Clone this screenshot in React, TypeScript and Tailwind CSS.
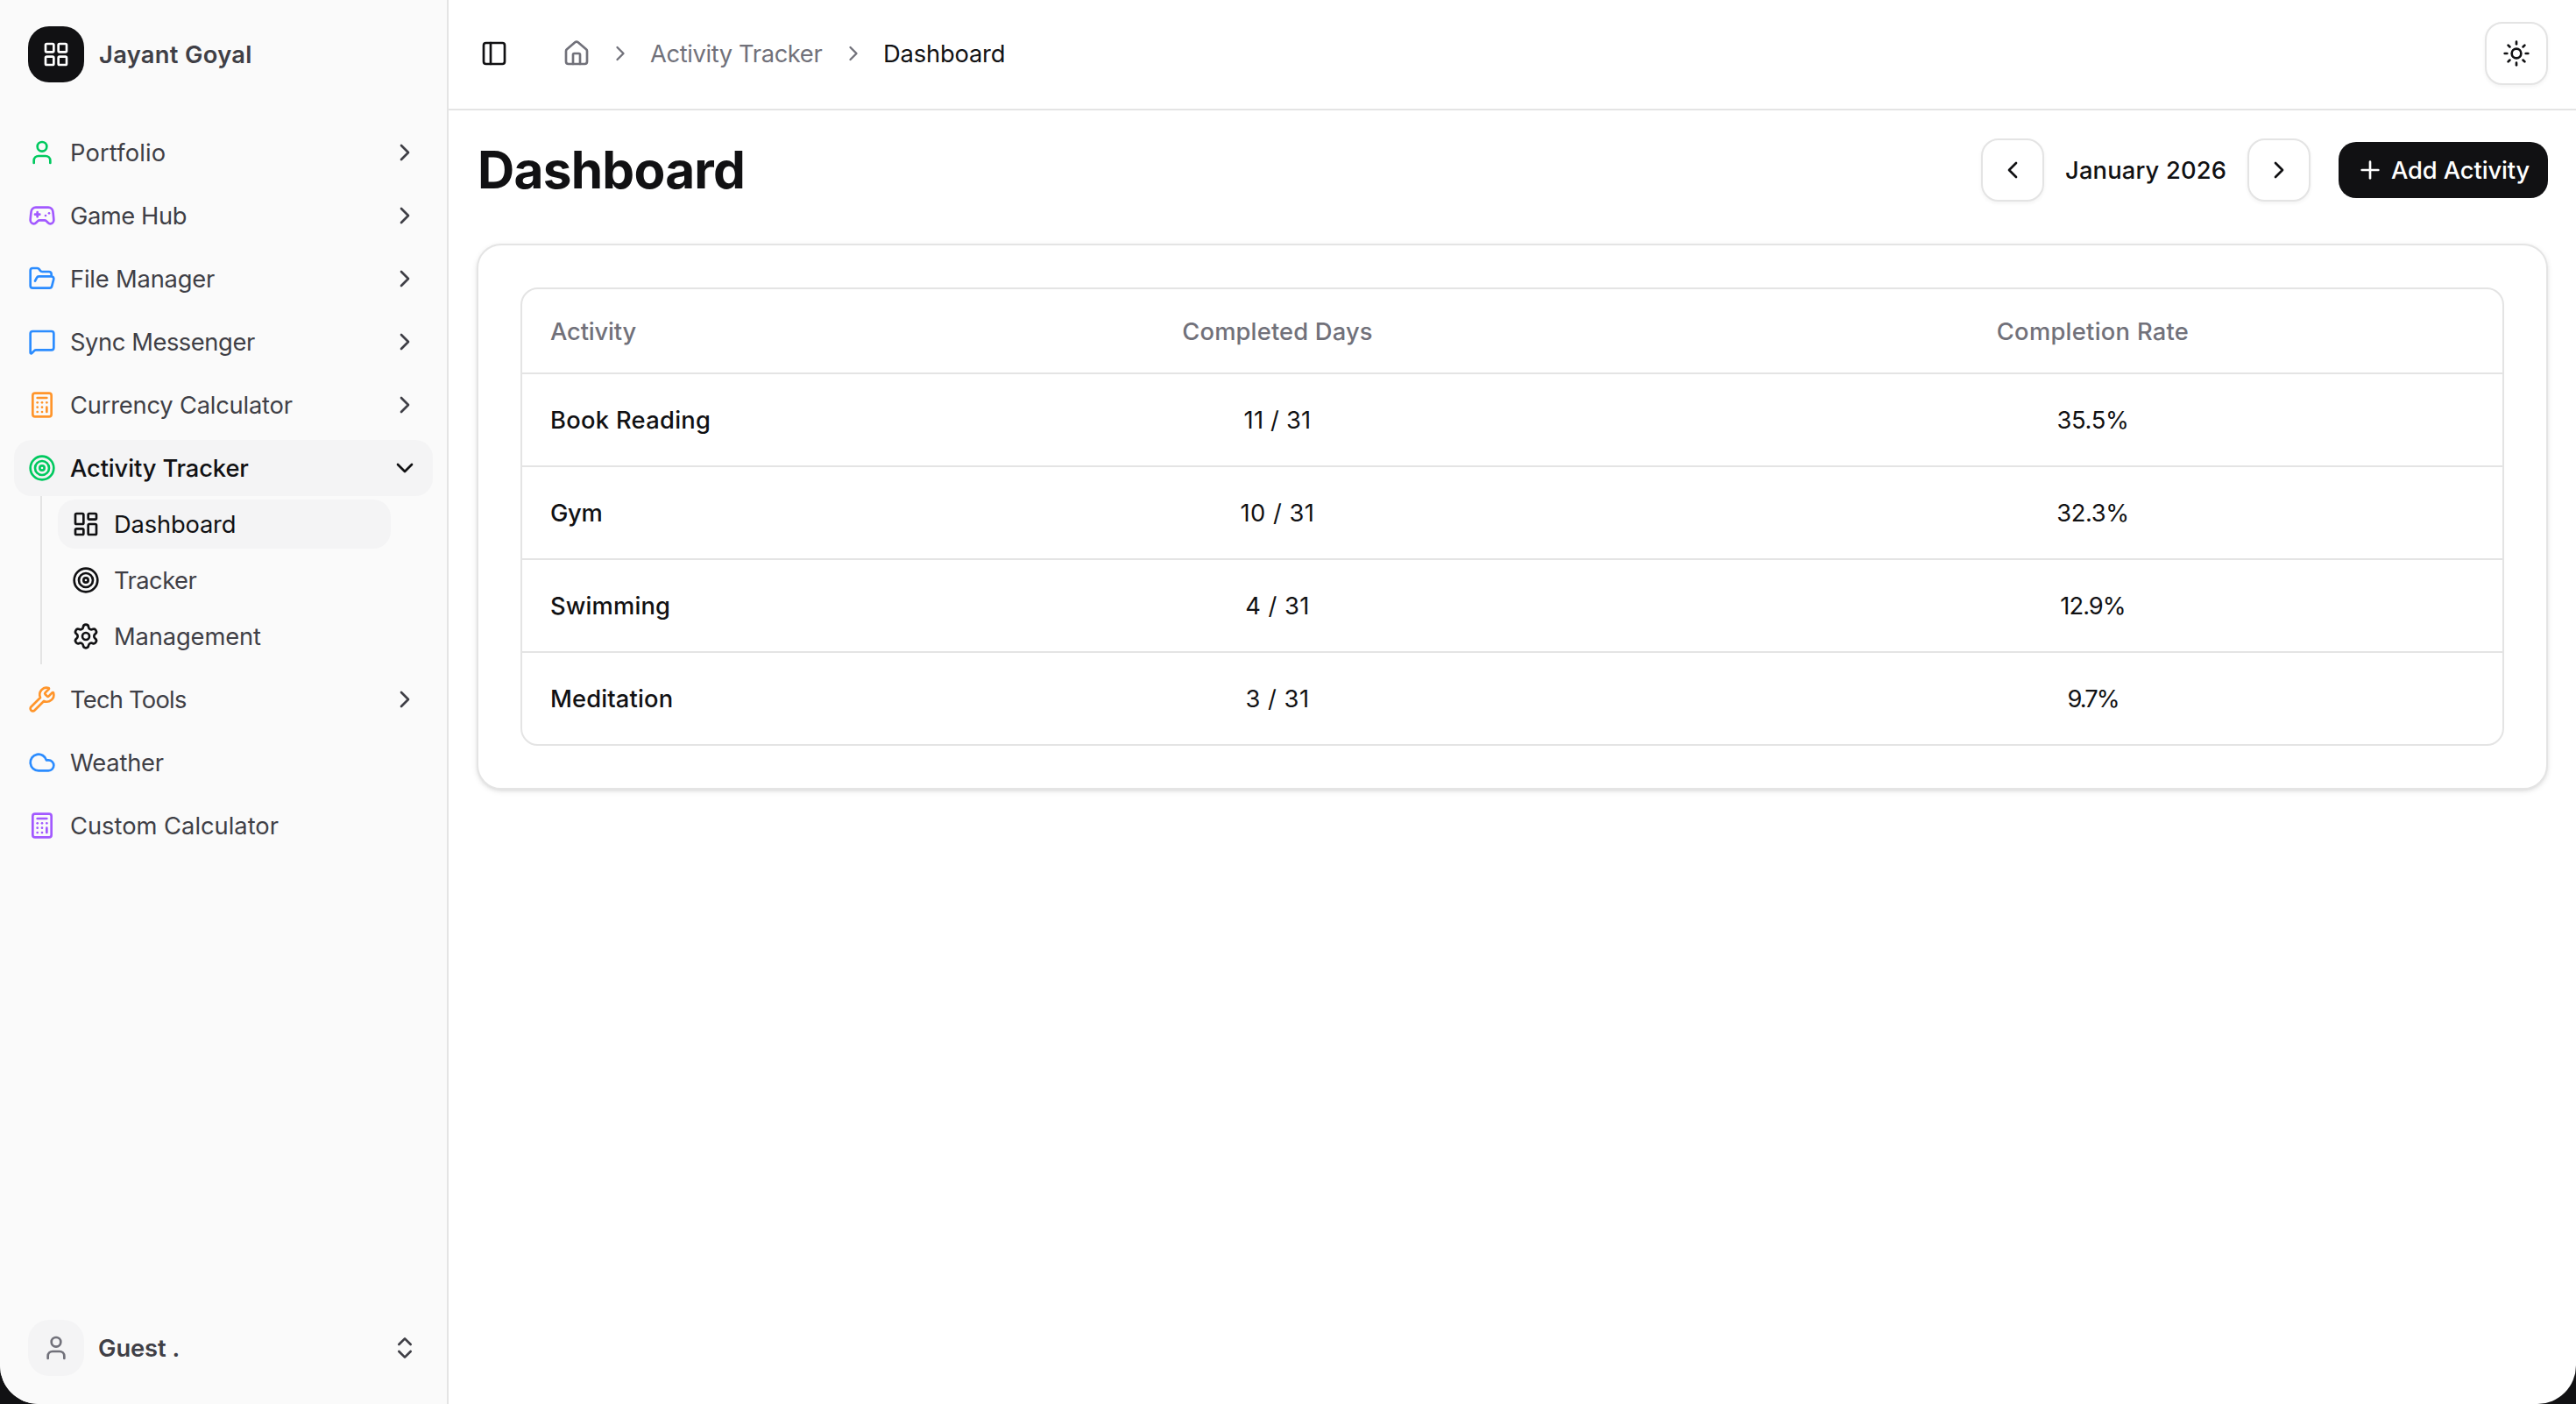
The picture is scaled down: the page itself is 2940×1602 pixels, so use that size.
import type { ReactNode } from "react";
import {
  Calculator,
  ChevronDown,
  ChevronLeft,
  ChevronRight,
  ChevronsUpDown,
  Cloud,
  FolderOpen,
  Gamepad2,
  House,
  LayoutDashboard,
  LayoutGrid,
  MessageSquare,
  PanelLeft,
  Plus,
  Settings,
  Sun,
  Target,
  User,
  Wrench,
  type LucideIcon,
} from "lucide-react";

type NavItem = {
  label: string;
  icon: ReactNode;
  tracking: string;
  expandable?: boolean;
};

const topItems: NavItem[] = [
  { label: "Portfolio", icon: <User className="size-8 text-[#00c95f]" />, tracking: "tracking-[0.15px]", expandable: true },
  { label: "Game Hub", icon: <Gamepad2 className="size-8 text-[#a259ff]" />, tracking: "tracking-[-0.42px]", expandable: true },
  { label: "File Manager", icon: <FolderOpen className="size-8 text-[#2b8cff]" />, tracking: "tracking-[-0.18px]", expandable: true },
  { label: "Sync Messenger", icon: <MessageSquare className="size-8 text-[#2b8cff]" />, tracking: "tracking-[-0.42px]", expandable: true },
  { label: "Currency Calculator", icon: <Calculator className="size-8 text-[#ff952b]" />, tracking: "tracking-[-0.2px]", expandable: true },
];

const bottomItems: NavItem[] = [
  { label: "Tech Tools", icon: <Wrench className="size-8 text-[#ff952b]" />, tracking: "tracking-[-0.74px]", expandable: true },
  { label: "Weather", icon: <Cloud className="size-8 text-[#2b8cff]" />, tracking: "tracking-[-0.2px]" },
  { label: "Custom Calculator", icon: <Calculator className="size-8 text-[#a259ff]" />, tracking: "tracking-normal" },
];

const subItems: { label: string; icon: LucideIcon; tracking: string; active?: boolean }[] = [
  { label: "Dashboard", icon: LayoutDashboard, tracking: "tracking-[-0.17px]", active: true },
  { label: "Tracker", icon: Target, tracking: "tracking-[-0.53px]" },
  { label: "Management", icon: Settings, tracking: "tracking-[-0.12px]" },
];

const rows = [
  { name: "Book Reading", nameTracking: "tracking-[0.3px]", days: "11 / 31", daysTracking: "tracking-[0.2px]", rate: "35.5%", rateTracking: "tracking-[-0.32px]" },
  { name: "Gym", nameTracking: "tracking-[-0.35px]", days: "10 / 31", daysTracking: "tracking-[0.5px]", rate: "32.3%", rateTracking: "tracking-[-0.32px]" },
  { name: "Swimming", nameTracking: "tracking-[0.15px]", days: "4 / 31", daysTracking: "tracking-[0.46px]", rate: "12.9%", rateTracking: "tracking-[-0.94px]" },
  { name: "Meditation", nameTracking: "tracking-[0.15px]", days: "3 / 31", daysTracking: "tracking-[0.5px]", rate: "9.7%", rateTracking: "tracking-[-2.02px]" },
];

function NavRow({ item }: { item: NavItem }) {
  return (
    <a className="flex h-16 items-center gap-4 px-4">
      {item.icon}
      <span className={`flex-1 pt-0.5 ${item.tracking}`}>{item.label}</span>
      {item.expandable && <ChevronRight className="size-8" />}
    </a>
  );
}

function Sidebar() {
  return (
    <aside className="flex w-[512px] shrink-0 flex-col border-r-2 border-[#e4e4e4] bg-[#fafafa] text-[#3f3f46]">
      <div className="flex h-[124px] items-center gap-4 px-8">
        <div className="flex size-16 items-center justify-center rounded-[24px] bg-[#111113] text-white">
          <LayoutGrid className="size-8" />
        </div>
        <span className="pt-0.5 pl-px font-semibold tracking-[0.32px]">Jayant Goyal</span>
      </div>

      <nav className="mt-[18px] flex flex-col gap-2 px-4">
        {topItems.map((item) => (
          <NavRow key={item.label} item={item} />
        ))}
        <div>
          <a className="flex h-16 items-center gap-4 rounded-[20px] bg-[#f4f4f5] px-4 text-[#111113]">
            <Target className="size-8 text-[#00c95f]" />
            <span className="flex-1 pt-0.5 font-medium tracking-[-0.12px]">Activity Tracker</span>
            <ChevronDown className="size-8" />
          </a>
          <div className="mr-12 ml-[30px] flex flex-col gap-2 border-l-2 border-[#e4e4e4] py-1 pl-[18px]">
            {subItems.map(({ label, icon: Icon, tracking, active }) => (
              <a
                key={label}
                className={
                  active
                    ? "flex h-14 items-center gap-4 rounded-[20px] bg-[#f4f4f5] px-4 text-[#111113]"
                    : "flex h-14 items-center gap-4 px-4"
                }
              >
                <Icon className="size-8 text-[#111113]" />
                <span className={`pt-0.5 ${tracking}`}>{label}</span>
              </a>
            ))}
          </div>
        </div>
        {bottomItems.map((item) => (
          <NavRow key={item.label} item={item} />
        ))}
      </nav>

      <div className="mt-auto mb-8 flex h-16 items-center gap-4 px-8">
        <div className="flex size-16 items-center justify-center rounded-[24px] bg-[#f4f4f5] text-[#71717a]">
          <User className="size-8" />
        </div>
        <span className="flex-1 pt-0.5 font-semibold tracking-[-0.07px]">Guest .</span>
        <ChevronsUpDown className="size-8" />
      </div>
    </aside>
  );
}

function IconButton({ children }: { children: ReactNode }) {
  return (
    <button className="flex size-[72px] items-center justify-center rounded-[20px] border-2 border-[#e4e4e4] bg-white shadow-[0_2px_4px_rgba(0,0,0,0.05)]">
      {children}
    </button>
  );
}

function TopBar() {
  return (
    <header className="flex h-[126px] items-center border-b-2 border-[#e4e4e4] pr-8 pb-0.5 pl-9">
      <PanelLeft className="size-8" />
      <div className="ml-[62px] flex items-center gap-5 text-[#71717a]">
        <House className="size-8" />
        <ChevronRight className="size-7" />
        <span className="w-[198px] pt-0.5 tracking-[-0.37px] whitespace-nowrap">Activity Tracker</span>
        <ChevronRight className="size-7" />
        <span className="pt-0.5 tracking-[-0.17px] text-[#111113]">Dashboard</span>
      </div>
      <div className="ml-auto">
        <IconButton>
          <Sun className="size-8" />
        </IconButton>
      </div>
    </header>
  );
}

function ActivityTable() {
  return (
    <div className="overflow-hidden rounded-[20px] border-2 border-[#e4e4e4]">
      <div className="grid h-[97px] grid-cols-[399px_926px_1fr] items-center border-b-2 border-[#e4e4e4] pt-0.5 font-medium text-[#71717a]">
        <span className="pl-8 tracking-[-0.13px]">Activity</span>
        <span className="text-center tracking-[0.18px]">Completed Days</span>
        <span className="text-center tracking-[0.29px]">Completion Rate</span>
      </div>
      <div className="divide-y-2 divide-[#e4e4e4]">
        {rows.map((row) => (
          <div key={row.name} className="grid h-[104px] grid-cols-[399px_926px_1fr] items-center box-content">
            <span className={`pt-0.5 pl-8 font-medium ${row.nameTracking}`}>{row.name}</span>
            <span className={`pt-0.5 text-center ${row.daysTracking}`}>{row.days}</span>
            <span className={`pt-0.5 text-center ${row.rateTracking}`}>{row.rate}</span>
          </div>
        ))}
      </div>
    </div>
  );
}

export default function App() {
  return (
    <div className="h-[1602px] w-[2940px] bg-[#111113]">
      <div className="flex h-full overflow-hidden rounded-b-[44px] bg-white font-['Inter',sans-serif] text-[27.3px] leading-10 text-[#111113]">
        <Sidebar />
        <main className="flex-1">
          <TopBar />
          <div className="px-8 pt-8">
            <div className="flex h-[72px] items-center">
              <h1 className="pl-px text-[58.5px] leading-[72px] font-bold tracking-[-0.76px]">Dashboard</h1>
              <div className="ml-auto flex items-center gap-6">
                <IconButton>
                  <ChevronLeft className="size-8" />
                </IconButton>
                <span className="w-[184px] pt-0.5 text-center font-medium tracking-[0.18px] whitespace-nowrap">January 2026</span>
                <IconButton>
                  <ChevronRight className="size-8" />
                </IconButton>
              </div>
              <button className="ml-8 flex h-16 w-[239px] items-center gap-2 rounded-[20px] bg-[#111113] pl-5 font-medium tracking-[-0.1px] whitespace-nowrap text-white">
                <Plus className="size-8" />
                <span className="pt-0.5">Add Activity</span>
              </button>
            </div>
            <section className="mt-12 rounded-[28px] border-2 border-[#e4e4e4] bg-white p-12 shadow-[0_2px_6px_rgba(0,0,0,0.1),0_2px_4px_-2px_rgba(0,0,0,0.1)]">
              <ActivityTable />
            </section>
          </div>
        </main>
      </div>
    </div>
  );
}
